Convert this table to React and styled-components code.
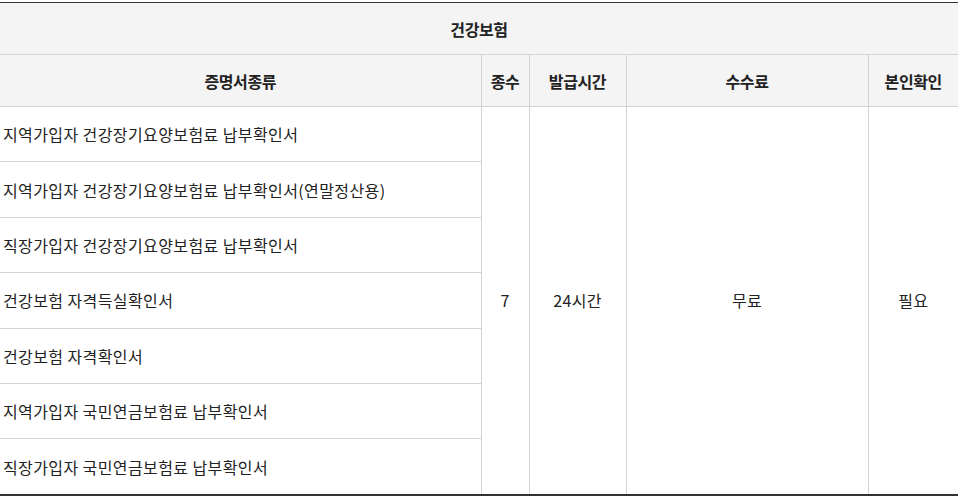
import React from "react";
import styled, { createGlobalStyle } from "styled-components";

const Global = createGlobalStyle`
  html, body { margin: 0; padding: 0; background: #fff; }
  body { font-family: "Noto Sans CJK KR", "Noto Sans", sans-serif; color: #222; }
`;

const Wrap = styled.div`
  padding-top: 2px;
`;

const Table = styled.table`
  width: 958px;
  border-collapse: collapse;
  table-layout: fixed;
  border-top: 1px solid #333;
  border-bottom: 2px solid #333;
`;

const HeadCell = styled.th`
  background: #f4f4f4;
  height: 51px;
  padding: 0;
  font-size: 16px;
  font-weight: 700;
  letter-spacing: -0.4px;
  color: #222;
  text-align: center;
  vertical-align: middle;
  border-bottom: 1px solid #d3d3d3;
  border-left: ${(p) => (p.$first ? "none" : "1px solid #d3d3d3")};
`;

const NameCell = styled.td`
  height: 54.4px;
  padding: 0 0 0 3px;
  font-size: 16px;
  letter-spacing: 0.4px;
  color: #222;
  text-align: left;
  vertical-align: middle;
  border-bottom: ${(p) => (p.$last ? "none" : "1px solid #d3d3d3")};
`;

const MergedCell = styled.td`
  padding: 0;
  font-size: 16px;
  letter-spacing: 0.3px;
  color: #222;
  text-align: center;
  vertical-align: middle;
  border-left: 1px solid #d3d3d3;
`;

const docs = [
  "지역가입자 건강장기요양보험료 납부확인서",
  "지역가입자 건강장기요양보험료 납부확인서(연말정산용)",
  "직장가입자 건강장기요양보험료 납부확인서",
  "건강보험 자격득실확인서",
  "건강보험 자격확인서",
  "지역가입자 국민연금보험료 납부확인서",
  "직장가입자 국민연금보험료 납부확인서",
];

export default function App() {
  return (
    <Wrap>
      <Global />
      <Table>
        <colgroup>
          <col style={{ width: 481 }} />
          <col style={{ width: 48 }} />
          <col style={{ width: 97 }} />
          <col style={{ width: 242 }} />
          <col style={{ width: 90 }} />
        </colgroup>
        <thead>
          <tr>
            <HeadCell colSpan={5} $first>건강보험</HeadCell>
          </tr>
          <tr>
            <HeadCell $first>증명서종류</HeadCell>
            <HeadCell>종수</HeadCell>
            <HeadCell>발급시간</HeadCell>
            <HeadCell>수수료</HeadCell>
            <HeadCell>본인확인</HeadCell>
          </tr>
        </thead>
        <tbody>
          {docs.map((d, i) => (
            <tr key={d}>
              <NameCell $last={i === docs.length - 1}>{d}</NameCell>
              {i === 0 && (
                <>
                  <MergedCell rowSpan={7}>7</MergedCell>
                  <MergedCell rowSpan={7}>24시간</MergedCell>
                  <MergedCell rowSpan={7}>무료</MergedCell>
                  <MergedCell rowSpan={7}>필요</MergedCell>
                </>
              )}
            </tr>
          ))}
        </tbody>
      </Table>
    </Wrap>
  );
}
